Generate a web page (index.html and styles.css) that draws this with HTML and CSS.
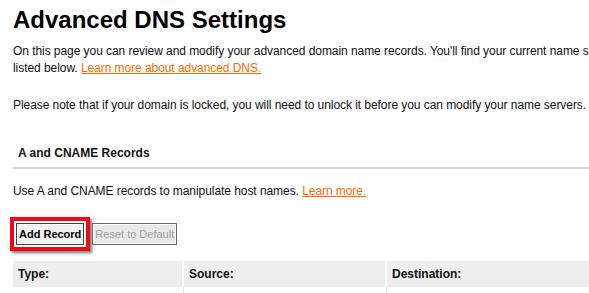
FILE: index.html
```html
<!DOCTYPE html>
<html lang="en">
  <head>
    <meta charset="UTF-8" />
    <meta name="viewport" content="width=device-width, initial-scale=1.0" />
    <title>Advanced DNS Settings</title>
    <link rel="stylesheet" href="styles.css">
  </head>
  <body>
    <div class="page">
      <h1>Advanced DNS Settings</h1>
      <p class="intro">
        On this page you can review and modify your advanced domain name records. You'll find your current name servers<br />
        listed below. <a href="#">Learn more about advanced DNS.</a>
      </p>
      <p class="note">
        Please note that if your domain is locked, you will need to unlock it before you can modify your name servers.
      </p>

      <section class="records">
        <h2 class="section-title">A and CNAME Records</h2>
        <p class="section-text">
          Use A and CNAME records to manipulate host names. <a href="#">Learn more.</a>
        </p>
        <div class="actions">
          <span class="highlight">
            <button class="btn btn-main">Add Record</button>
          </span>
          <button class="btn btn-off" disabled>Reset to Default</button>
        </div>
        <table class="records-table">
          <thead>
            <tr>
              <th class="col-type">Type:</th>
              <th class="col-source">Source:</th>
              <th>Destination:</th>
            </tr>
          </thead>
          <tbody>
            <tr>
              <td></td>
              <td></td>
              <td></td>
            </tr>
          </tbody>
        </table>
      </section>
    </div>
  </body>
</html>
```

FILE: styles.css
```css
body {
  margin: 0;
  background-color: #fff;
  color: #111;
  font-family: "Liberation Sans", Arial, sans-serif;
  overflow: hidden;
}

.page {
  width: 700px;
  padding: 6px 0 0 13px;
}

h1 {
  margin: 0;
  font-size: 24px;
  line-height: 28px;
  font-weight: bold;
  color: #000;
}

p {
  margin: 0;
  font-size: 12px;
  line-height: 17px;
  letter-spacing: -0.06px;
}

a {
  color: #ff6a00;
  text-decoration: underline;
}

.intro {
  margin-top: 9px;
}

.note {
  margin-top: 20px;
}

/* A and CNAME */
.records {
  margin-top: 31px;
}

.section-title {
  margin: 0;
  padding: 0 0 5px 5px;
  font-size: 12px;
  line-height: 17px;
  border-bottom: 2px solid #d6d6d6;
}

.section-text {
  margin-top: 14px;
}

.actions {
  display: flex;
  align-items: center;
  gap: 2px;
  margin-top: 17px;
  margin-left: -3px;
}

.highlight {
  display: inline-flex;
  padding: 2px;
  border: 4px solid #ee0a16;
  box-shadow: 2px 2px 3px rgba(0, 0, 0, 0.55);
}

.btn {
  height: 22px;
  padding: 0 2px;
  font-family: "Liberation Sans", Arial, sans-serif;
  font-size: 11px;
  border: 1px solid #444;
  box-shadow: inset 0 0 0 1px #fff;
}

.btn-main {
  font-weight: bold;
  color: #000;
  background-color: #f2f2f2;
}

.btn-off {
  color: #a0a0a0;
  background-color: #e9e9e9;
  border-color: #666;
}

.records-table {
  margin-top: 10px;
  width: 640px;
  border-collapse: collapse;
}

.records-table th {
  height: 26px;
  padding: 0 0 0 5px;
  text-align: left;
  font-size: 12px;
  background-color: #eeeeee;
  border-right: 2px solid #fff;
}

.col-type {
  width: 164px;
}

.col-source {
  width: 196px;
}

.records-table td {
  height: 26px;
  border-right: 1px solid #e6e6e6;
}
```
